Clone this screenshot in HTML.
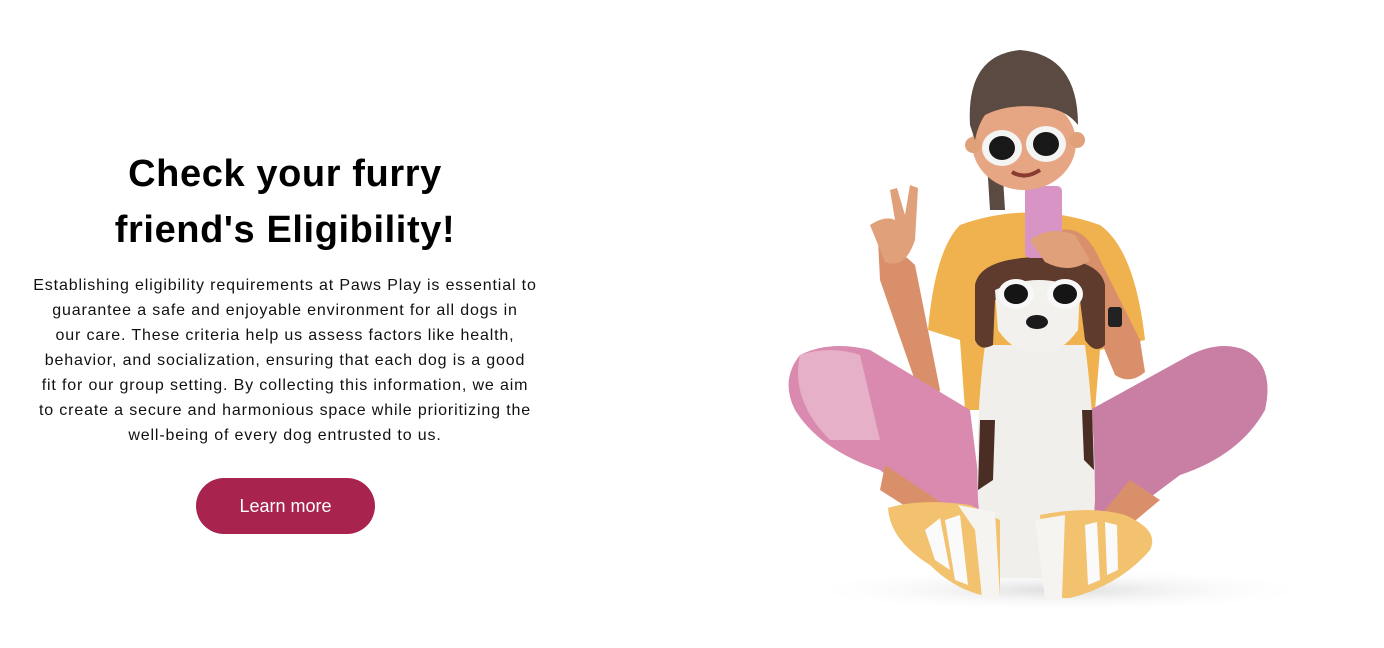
<!DOCTYPE html>
<html><head><meta charset="utf-8"><style>
html,body{margin:0;padding:0;background:#fff;width:1384px;height:648px;overflow:hidden;position:relative}
h1{position:absolute;left:20px;width:530px;top:146px;margin:0;text-align:center;font:bold 38px/56px "Liberation Sans",sans-serif;color:#000;letter-spacing:0.6px}
p{position:absolute;left:10px;width:550px;top:273px;margin:0;text-align:center;font:16px/25px "Liberation Sans",sans-serif;color:#111;letter-spacing:0.85px}
.btn{position:absolute;left:196px;top:478px;width:179px;height:56px;border-radius:28px;background:#a8234e;color:#fff;font:18px/56px "Liberation Sans",sans-serif;text-align:center}
svg{position:absolute;left:0;top:0}
</style></head><body>
<h1>Check your furry<br>friend's Eligibility!</h1>
<p>Establishing eligibility requirements at Paws Play is essential to<br>guarantee a safe and enjoyable environment for all dogs in<br>our care. These criteria help us assess factors like health,<br>behavior, and socialization, ensuring that each dog is a good<br>fit for our group setting. By collecting this information, we aim<br>to create a secure and harmonious space while prioritizing the<br>well-being of every dog entrusted to us.</p>
<div class="btn">Learn more</div>
<svg width="1384" height="648" viewBox="0 0 1384 648">
<defs><radialGradient id="sh" cx="0.5" cy="0.5" r="0.5"><stop offset="0" stop-color="#ddd"/><stop offset="1" stop-color="#fff" stop-opacity="0"/></radialGradient></defs>
<ellipse cx="1060" cy="590" rx="260" ry="22" fill="url(#sh)"/>
<path d="M985 130 L990 210 L1005 210 L1000 130Z" fill="#5a4a42"/>
<path d="M960 225 Q1030 200 1100 225 Q1135 250 1145 340 L1100 350 L1095 410 L965 410 L960 340 L928 330 Q935 250 960 225Z" fill="#f0b24f"/>
<path d="M878 240 Q900 250 915 265 L940 390 Q935 405 920 395 L880 280Z" fill="#d9906a"/>
<path d="M870 225 Q885 215 895 220 L890 190 L897 188 L905 215 L910 185 L918 188 L915 240 Q905 270 885 262 Z" fill="#e0a07a"/>
<path d="M1060 230 Q1085 225 1100 260 L1140 340 L1145 372 Q1130 385 1115 375 L1080 290Z" fill="#d9906a"/>
<rect x="1108" y="307" width="14" height="20" rx="3" fill="#222"/>
<path d="M800 355 Q830 340 870 350 L970 410 L985 530 L940 520 L880 470 Q820 450 795 410 Q780 380 800 355Z" fill="#d98aae"/>
<path d="M800 355 Q830 345 860 355 L880 440 L830 440 Q790 400 800 355Z" fill="#e6b0c8"/>
<path d="M1245 350 Q1275 365 1265 410 Q1240 455 1180 475 L1120 520 L1080 530 L1090 410 L1190 355 Q1220 340 1245 350Z" fill="#c97ea4"/>
<path d="M885 465 L945 505 L935 525 L880 490Z" fill="#d9906a"/>
<path d="M1130 480 L1160 500 L1130 525 L1105 510Z" fill="#d9906a"/>
<path d="M985 345 L1085 345 Q1095 420 1095 500 L1090 578 L985 578 L978 500 Q975 420 985 345Z" fill="#f1efec"/>
<path d="M980 420 L995 420 L993 480 L978 490Z" fill="#4a2e24"/>
<path d="M1082 410 L1092 410 L1094 470 L1084 460Z" fill="#4a2e24"/>
<path d="M975 285 Q980 258 1040 257 Q1100 258 1105 285 L1105 345 Q1095 355 1085 340 L1080 300 L995 300 L993 345 Q980 352 975 340Z" fill="#5e3b2c"/>
<path d="M995 290 Q1040 270 1080 290 L1078 330 Q1060 355 1040 352 Q1015 355 998 330Z" fill="#f3f1ee"/>
<ellipse cx="1037" cy="322" rx="11" ry="7" fill="#1a1a1a"/>
<ellipse cx="1016" cy="294" rx="18" ry="15" fill="#f8f8f8"/><ellipse cx="1016" cy="294" rx="12" ry="10" fill="#151515"/>
<ellipse cx="1065" cy="294" rx="18" ry="15" fill="#f8f8f8"/><ellipse cx="1065" cy="294" rx="12" ry="10" fill="#151515"/>
<rect x="1025" y="186" width="37" height="72" rx="5" fill="#d894c4"/>
<path d="M1030 240 Q1050 225 1075 235 L1090 260 Q1070 275 1045 262Z" fill="#e0a07a"/>
<ellipse cx="1024" cy="143" rx="52" ry="47" fill="#e6a684"/>
<circle cx="973" cy="145" r="8" fill="#e0a07a"/><circle cx="1077" cy="140" r="8" fill="#e0a07a"/>
<path d="M970 125 Q966 55 1020 50 Q1078 55 1078 125 Q1068 112 1050 108 Q1010 102 985 115 Q978 125 975 140Z" fill="#5b4a42"/>
<path d="M1012 172 Q1025 180 1040 170" stroke="#8a3b30" stroke-width="4" fill="none"/>
<ellipse cx="1002" cy="148" rx="20" ry="18" fill="#f4f4f2"/><ellipse cx="1002" cy="148" rx="13" ry="12" fill="#181818"/>
<ellipse cx="1046" cy="144" rx="20" ry="18" fill="#f4f4f2"/><ellipse cx="1046" cy="144" rx="13" ry="12" fill="#181818"/>
<path d="M888 508 Q920 498 970 505 L1000 520 L1000 598 Q960 595 930 565 Q890 540 888 508Z" fill="#f2c26e"/>
<path d="M958 505 L995 512 L1000 598 L982 598 L975 530Z" fill="#f6f4f1"/>
<path d="M925 530 L940 518 L950 570 L935 560Z M945 520 L960 515 L968 585 L955 580Z" fill="#fafafa"/>
<path d="M1040 515 Q1090 505 1125 515 Q1160 530 1150 550 Q1120 585 1070 598 L1045 598Z" fill="#f2c26e"/>
<path d="M1035 520 L1065 515 L1062 598 L1045 598Z" fill="#f6f4f1"/>
<path d="M1085 525 L1097 522 L1100 580 L1088 585Z M1105 522 L1117 525 L1118 570 L1107 575Z" fill="#fafafa"/>
</svg>
</body></html>
